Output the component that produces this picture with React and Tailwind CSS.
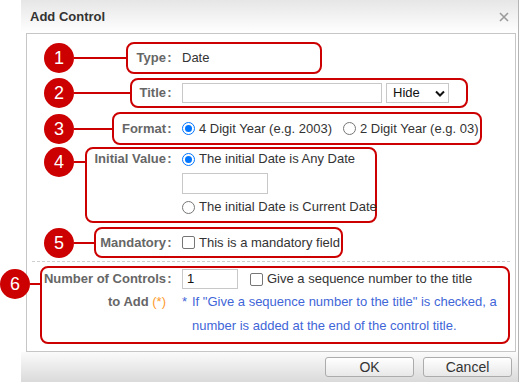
import React from 'react';

const RED = 'bg-[#cc0000]';

function Badge({ n }) {
  return (
    <div className={`flex h-[30px] w-[30px] shrink-0 items-center justify-center rounded-full ${RED} text-[18px] leading-none text-white`}>
      {n}
    </div>
  );
}

function Label({ w, children }) {
  return (
    <div className="flex shrink-0 font-bold text-[#666]">
      <span className={`${w} whitespace-nowrap text-right`}>{children}</span>
      <span className="w-[7px] text-center">:</span>
    </div>
  );
}

function Radio({ checked }) {
  if (checked) {
    return (
      <span className="flex h-[13px] w-[13px] shrink-0 items-center justify-center rounded-full border-[1.5px] border-[#0075ff] bg-white">
        <span className="h-[7px] w-[7px] rounded-full bg-[#0075ff]" />
      </span>
    );
  }
  return <span className="h-[13px] w-[13px] shrink-0 rounded-full border border-[#767676] bg-white" />;
}

function Checkbox({ className = '' }) {
  return <span className={`h-[13px] w-[13px] shrink-0 rounded-[2px] border border-[#767676] bg-white ${className}`} />;
}

export default function App() {
  return (
    <div className="flex h-[382px] w-[522px] overflow-hidden bg-white font-['Liberation_Sans',Arial,sans-serif] text-[13px] leading-[20px] text-[#333]">
      <div className="ml-[21px] flex w-[498px] flex-col border-r border-[#b4b4b4]">
        {/* Title bar */}
        <div className="flex h-[33px] shrink-0 items-center justify-between bg-linear-to-b from-[#e6e6e6] to-white pl-[9px] pr-[9px]">
          <span className="font-bold text-[#333]">Add Control</span>
          <svg width="10" height="10" viewBox="0 0 10 10" className="mt-[1px]">
            <path d="M1 1 L9 9 M9 1 L1 9" stroke="#9a9a9a" strokeWidth="1.6" />
          </svg>
        </div>

        {/* Body */}
        <div className="ml-[5px] h-[319px] w-[490px] shrink-0 border border-[#c6c6c6]">
          {/* 1 Type */}
          <div className="ml-[17px] mt-[8px] flex items-center">
            <Badge n="1" />
            <div className={`h-[2px] w-[52px] ${RED}`} />
            <div className="flex h-[32px] w-[196px] items-center rounded-lg border-2 border-[#cc0000]">
              <Label w="w-[38px]">Type</Label>
              <span className="ml-[9px]">Date</span>
            </div>
          </div>

          {/* 2 Title */}
          <div className="ml-[17px] mt-[4px] flex items-center">
            <Badge n="2" />
            <div className={`h-[2px] w-[56px] ${RED}`} />
            <div className="flex h-[30px] w-[338px] items-center rounded-lg border-2 border-[#cc0000]">
              <Label w="w-[34px]">Title</Label>
              <div className="ml-[9px] h-[20px] w-[200px] border border-[#c8c8c8]" />
              <div className="ml-[4px] flex h-[20px] w-[63px] items-center justify-between border border-[#c8c8c8] pl-[6px] pr-[3px] text-[#111]">
                <span>Hide</span>
                <svg width="10" height="7" viewBox="0 0 10 7">
                  <path d="M1 1.5 L5 5.5 L9 1.5" fill="none" stroke="#111" strokeWidth="2" />
                </svg>
              </div>
            </div>
          </div>

          {/* 3 Format */}
          <div className="ml-[17px] mt-[4px] flex items-center">
            <Badge n="3" />
            <div className={`h-[2px] w-[38px] ${RED}`} />
            <div className="flex h-[33px] w-[370px] items-center rounded-lg border-2 border-[#cc0000]">
              <Label w="w-[52px]">Format</Label>
              <span className="ml-[9px] flex items-center">
                <Radio checked />
                <span className="ml-[4px] whitespace-nowrap">4 Digit Year (e.g. 2003)</span>
              </span>
              <span className="ml-[11px] flex items-center">
                <Radio />
                <span className="ml-[4px] whitespace-nowrap">2 Digit Year (e.g. 03)</span>
              </span>
            </div>
          </div>

          {/* 4 Initial value */}
          <div className="ml-[17px] mt-[2px] flex items-start">
            <div className="flex items-center">
              <Badge n="4" />
              <div className={`h-[2px] w-[11px] ${RED}`} />
            </div>
            <div className="flex h-[76px] w-[292px] items-start rounded-lg border-2 border-[#cc0000]">
              <Label w="w-[79px]">Initial Value</Label>
              <div className="ml-[9px] flex flex-col">
                <div className="flex h-[20px] items-center">
                  <Radio checked />
                  <span className="ml-[4px] whitespace-nowrap">The initial Date is Any Date</span>
                </div>
                <div className="mt-[4px] h-[21px] w-[86px] border border-[#c8c8c8]" />
                <div className="mt-[3px] flex h-[20px] items-center">
                  <Radio />
                  <span className="ml-[4px] whitespace-nowrap">The initial Date is Current Date</span>
                </div>
              </div>
            </div>
          </div>

          {/* 5 Mandatory */}
          <div className="ml-[17px] mt-[4px] flex items-center">
            <Badge n="5" />
            <div className={`h-[2px] w-[20px] ${RED}`} />
            <div className="flex h-[31px] w-[249px] items-center rounded-lg border-2 border-[#cc0000]">
              <Label w="w-[70px]">Mandatory</Label>
              <span className="ml-[9px] flex items-center">
                <Checkbox />
                <span className="ml-[4px] whitespace-nowrap">This is a mandatory field</span>
              </span>
            </div>
          </div>

          <div className="ml-[5px] mt-[3px] w-[478px] border-t border-dashed border-[#cfcfcf]" />

          {/* 6 Number of controls */}
          <div className="-ml-[27px] mt-[4px] flex items-start">
            <div className="mt-[3px] flex items-center">
              <Badge n="6" />
              <div className={`h-[2px] w-[10px] ${RED}`} />
            </div>
            <div className="flex h-[78px] w-[470px] items-start rounded-lg border-2 border-[#cc0000]">
              <div className="flex shrink-0 flex-col font-bold text-[#666]">
                <div className="flex h-[22px] items-center">
                  <span className="w-[124px] whitespace-nowrap text-right">Number of Controls</span>
                  <span className="w-[7px] text-center">:</span>
                </div>
                <div className="w-[124px] whitespace-nowrap text-right leading-[24px]">
                  to Add <span className="font-normal text-[#ff9a2e]">(*)</span>
                </div>
              </div>
              <div className="ml-[9px] flex flex-col">
                <div className="flex h-[22px] items-center">
                  <div className="flex h-[20px] w-[56px] items-center border border-[#c8c8c8] pl-[4px] text-[#111]">1</div>
                  <Checkbox className="ml-[12px]" />
                  <span className="ml-[4px] whitespace-nowrap">Give a sequence number to the title</span>
                </div>
                <div className="flex whitespace-nowrap leading-[24px] text-[#3f66d8]">
                  <span className="w-[10px] shrink-0">*</span>
                  <span>
                    If "Give a sequence number to the title" is checked, a
                    <br />
                    number is added at the end of the control title.
                  </span>
                </div>
              </div>
            </div>
          </div>
        </div>

        {/* Footer */}
        <div className="flex h-[30px] shrink-0 items-start justify-end gap-[9px] bg-linear-to-b from-[#fbfbfb] to-[#dadada] pr-[6px] pt-[5px]">
          <button className="h-[20px] w-[89px] rounded-[3px] border border-[#acacac] bg-linear-to-b from-white to-[#e8e8e8] text-[14px] leading-none text-[#333]">
            OK
          </button>
          <button className="h-[20px] w-[89px] rounded-[3px] border border-[#acacac] bg-linear-to-b from-white to-[#e8e8e8] text-[14px] leading-none text-[#333]">
            Cancel
          </button>
        </div>
      </div>
    </div>
  );
}
